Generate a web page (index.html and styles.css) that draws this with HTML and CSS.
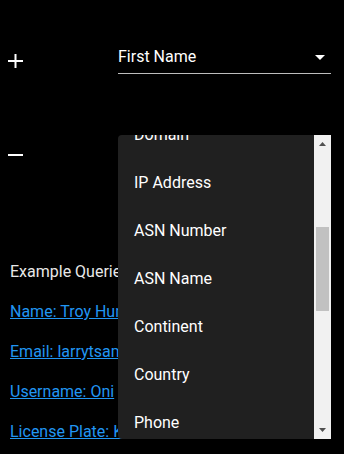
FILE: index.html
```html
<!DOCTYPE html>
<html lang="en">
<head>
<meta charset="utf-8">
<title>Search</title>
<link rel="stylesheet" href="styles.css">
</head>
<body>
<div class="page">
  <div class="rows">
    <div class="row">
      <button class="icon-btn" aria-label="Add">
        <svg width="16" height="16" viewBox="0 0 16 16"><rect x="0" y="7" width="15" height="2" fill="#fff"/><rect x="6.5" y="1" width="2" height="14" fill="#fff"/></svg>
      </button>
      <div class="select">
        <span class="select-value">First Name</span>
        <svg class="select-arrow" width="10" height="5" viewBox="0 0 10 5"><path d="M0 0H10L5 5Z" fill="#fff"/></svg>
      </div>
    </div>
    <div class="row">
      <button class="icon-btn" aria-label="Remove">
        <svg width="16" height="16" viewBox="0 0 16 16"><rect x="0" y="7" width="15" height="2" fill="#fff"/></svg>
      </button>
      <div class="select">
        <span class="select-value">Domain</span>
        <svg class="select-arrow" width="10" height="5" viewBox="0 0 10 5"><path d="M0 0H10L5 5Z" fill="#fff"/></svg>
      </div>
    </div>
  </div>

  <section class="examples">
    <p class="examples-title">Example Queries</p>
    <p><a href="#">Name: Troy Hunt</a></p>
    <p><a href="#">Email: larrytsamanta@gmail.com</a></p>
    <p><a href="#">Username: Oni</a></p>
    <p><a href="#">License Plate: KHL9345</a></p>
  </section>

  <div class="menu">
    <ul class="menu-list">
      <li>Domain</li>
      <li>IP Address</li>
      <li>ASN Number</li>
      <li>ASN Name</li>
      <li>Continent</li>
      <li>Country</li>
      <li>Phone</li>
    </ul>
    <div class="scrollbar">
      <div class="sb-btn sb-up"><svg width="7" height="4" viewBox="0 0 7 4"><path d="M0 4L3.5 0L7 4Z" fill="#505050"/></svg></div>
      <div class="sb-track"><div class="sb-thumb"></div></div>
      <div class="sb-btn sb-down"><svg width="7" height="4" viewBox="0 0 7 4"><path d="M0 0H7L3.5 4Z" fill="#505050"/></svg></div>
    </div>
  </div>
</div>
</body>
</html>
```

FILE: styles.css
```css
html, body {
  margin: 0;
  padding: 0;
  background: #000;
}

body {
  font-family: Roboto, "Liberation Sans", sans-serif;
  font-size: 16px;
  line-height: 24px;
  color: #fff;
}

.page {
  position: relative;
  height: 454px;
  overflow: hidden;
}

.rows {
  padding-top: 45px;
  display: flex;
  flex-direction: column;
  gap: 65px;
}

.row {
  display: flex;
  align-items: flex-start;
  padding-left: 8px;
  padding-right: 13px;
}

.icon-btn {
  background: none;
  border: 0;
  padding: 0;
  margin: 8px 0 0 0;
  width: 16px;
  height: 16px;
  display: block;
}

.icon-btn svg {
  display: block;
}

.select {
  margin-left: auto;
  width: 213px;
  display: flex;
  align-items: center;
  justify-content: space-between;
  padding-bottom: 4px;
  border-bottom: 1px solid #bdbdbd;
}

.select-value {
  color: #fff;
}

.select-arrow {
  display: block;
  margin-right: 6px;
  margin-top: 1px;
}

.examples {
  margin-top: 92px;
  padding-left: 10px;
  white-space: nowrap;
}

.examples p {
  margin: 0 0 16px 0;
}

.examples-title {
  color: #e8e8e8;
}

.examples a {
  color: #2196f3;
  text-decoration: underline;
}

.menu {
  position: absolute;
  left: 118px;
  top: 135px;
  width: 213px;
  height: 304px;
  display: flex;
  background: #202020;
  border-radius: 4px 0 0 4px;
  overflow: hidden;
}

.menu-list {
  flex: 1;
  list-style: none;
  margin: -24px 0 0 0;
  padding: 0;
}

.menu-list li {
  height: 48px;
  padding: 12px 16px;
  box-sizing: border-box;
  color: #fff;
}

.scrollbar {
  width: 17px;
  background: #f1f1f1;
  display: flex;
  flex-direction: column;
}

.sb-btn {
  height: 17px;
  display: flex;
  justify-content: center;
}

.sb-btn svg {
  display: block;
}

.sb-up {
  align-items: flex-start;
  padding-top: 7px;
  box-sizing: border-box;
}

.sb-down {
  align-items: flex-start;
  padding-top: 6px;
  box-sizing: border-box;
}

.sb-track {
  flex: 1;
}

.sb-thumb {
  margin: 75px 2px 0 2px;
  height: 84px;
  background: #c1c1c1;
}
```
